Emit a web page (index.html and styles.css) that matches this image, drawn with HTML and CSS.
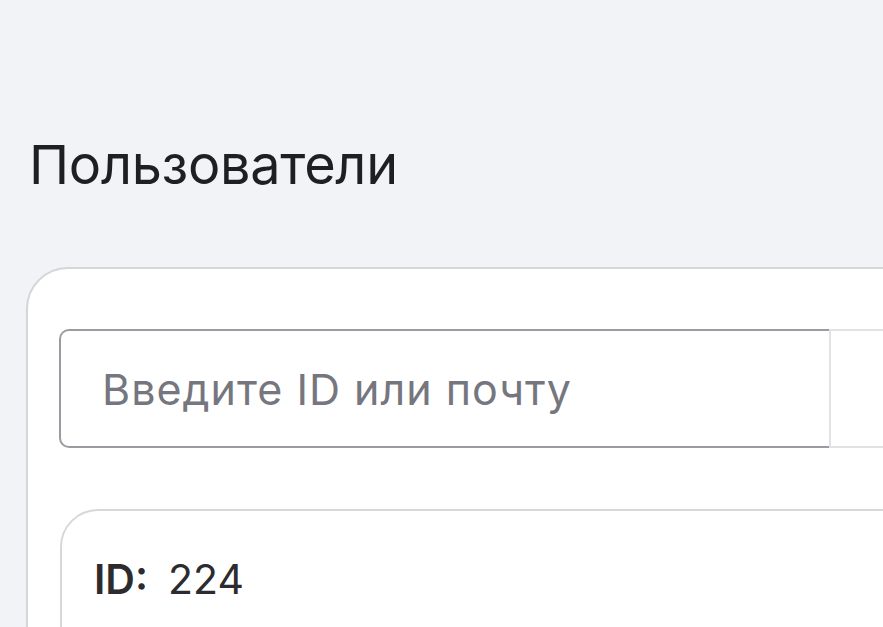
FILE: index.html
```html
<!DOCTYPE html>
<html lang="ru">
<head>
<meta charset="utf-8">
<title>Пользователи</title>
<link rel="stylesheet" href="styles.css">
</head>
<body>
<main class="page">
  <h1 class="title">Пользователи</h1>
  <section class="panel">
    <form class="search">
      <input class="search-input" type="text" placeholder="Введите ID или почту">
      <button class="search-btn" type="button" aria-label="Найти"></button>
    </form>
    <article class="user-card">
      <div class="user-row"><span class="user-label">ID:</span><span class="user-value">224</span></div>
    </article>
  </section>
</main>
</body>
</html>
```
FILE: styles.css
```css
html, body {
  margin: 0;
  padding: 0;
  background: #f2f3f7;
  overflow: hidden;
  height: 100%;
}
body {
  font-family: Inter, "Noto Sans", sans-serif;
  color: #1c1c1e;
}
.page {
  padding: 132px 0 0 26px;
  width: 1100px;
}
.title {
  margin: 0 0 70px 3px;
  font-size: 54px;
  line-height: 65px;
  font-weight: 400;
  color: #1e1f22;
  letter-spacing: -0.3px;
}
.panel {
  background: #fff;
  border: 2px solid #d6d6da;
  border-radius: 42px;
  padding: 60px 0 0 31px;
  height: 600px;
  box-sizing: border-box;
}
.search {
  display: flex;
  margin: 0;
}
.search-input {
  width: 770px;
  height: 119px;
  box-sizing: border-box;
  border: 2px solid #9b9ca1;
  border-right: none;
  border-radius: 10px 0 0 10px;
  padding: 0 0 0 41px;
  font-family: Inter, "Noto Sans", sans-serif;
  font-size: 43px;
  letter-spacing: 1px;
  color: #1c1c1e;
  background: #fff;
  outline: none;
}
.search-input::placeholder {
  color: #75767e;
}
.search-btn {
  width: 200px;
  height: 119px;
  box-sizing: border-box;
  border: 2px solid #e2e2e5;
  border-radius: 0 10px 10px 0;
  background: #fff;
}
.user-card {
  margin-top: 61px;
  margin-left: 1px;
  border: 2px solid #d8d8dc;
  border-radius: 38px;
  padding: 44px 0 0 32px;
  height: 300px;
  box-sizing: border-box;
  background: #fff;
}
.user-row {
  font-size: 41px;
  line-height: 49px;
  color: #2c2c2e;
}
.user-label {
  font-weight: 600;
  margin-right: 20px;
}
```
